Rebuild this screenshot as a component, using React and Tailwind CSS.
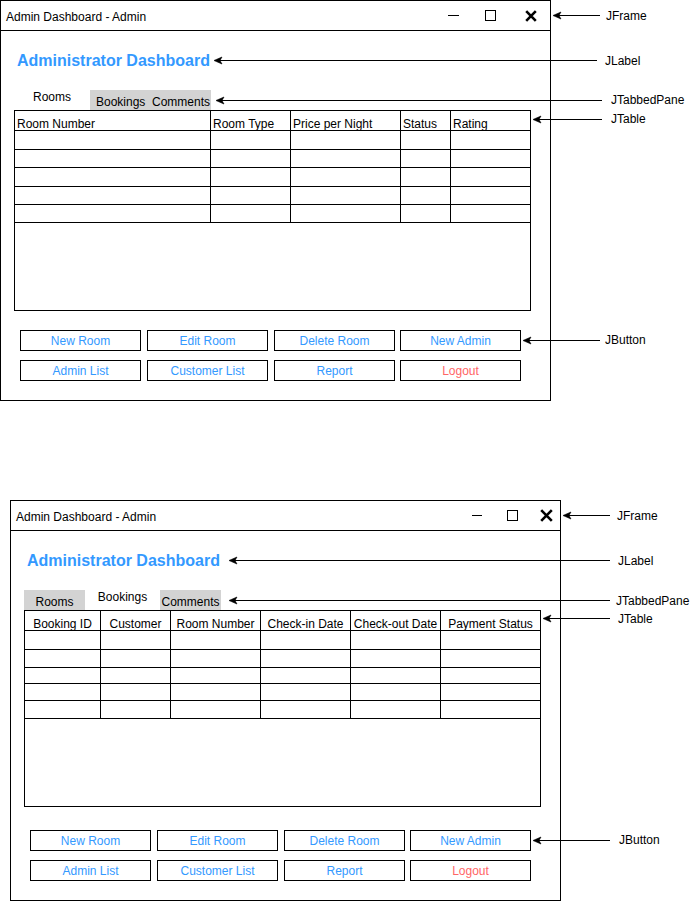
import React from 'react';

const FONT = "font-['Liberation_Sans',Arial,Helvetica,sans-serif]";

function CloseX({ w }) {
  return (
    <svg width={w} height={w} viewBox={`0 0 ${w} ${w}`} className="block">
      <path d={`M1.2 1.2 L${w - 1.2} ${w - 1.2} M${w - 1.2} 1.2 L1.2 ${w - 1.2}`} stroke="#000" strokeWidth="2.6" fill="none" />
    </svg>
  );
}

function TitleBar({ v }) {
  return (
    <div className="h-[30px] border-b border-black flex items-center pl-[5px] shrink-0">
      <span className="leading-[12px] pt-[2px]">Admin Dashboard - Admin</span>
      {v === 1 ? (
        <div className="ml-auto mr-[13px] flex items-center">
          <div className="w-[11px] h-px bg-black" />
          <div className="ml-[26px] w-[11px] h-[11px] border border-black" />
          <div className="ml-[29px]"><CloseX w={12} /></div>
        </div>
      ) : (
        <div className="ml-auto mr-[7px] flex items-center">
          <div className="w-[10px] h-px bg-black" />
          <div className="ml-[25px] w-[11px] h-[11px] border border-black" />
          <div className="ml-[22px]"><CloseX w={13} /></div>
        </div>
      )}
    </div>
  );
}

const T1 = {
  cols: ['w-[196px]', 'w-[80px]', 'w-[110px]', 'w-[50px]'],
  heads: ['Room Number', 'Room Type', 'Price per Night', 'Status', 'Rating'],
  rows: ['h-[19px]', 'h-[18px]', 'h-[19px]', 'h-[18px]', 'h-[18px]'],
  height: 'h-[201px]',
  headCls: 'pl-[2px] text-left',
};

const T2 = {
  cols: ['w-[76px]', 'w-[70px]', 'w-[90px]', 'w-[90px]', 'w-[90px]'],
  heads: ['Booking ID', 'Customer', 'Room Number', 'Check-in Date', 'Check-out Date', 'Payment Status'],
  rows: ['h-[19px]', 'h-[18px]', 'h-[16px]', 'h-[17px]', 'h-[18px]'],
  height: 'h-[197px]',
  headCls: 'text-center',
};

function Table({ t }) {
  const n = t.heads.length;
  const cellCls = (i) => (i < n - 1 ? `${t.cols[i]} border-r border-black shrink-0` : 'flex-1');
  return (
    <div className={`ml-[13px] w-[517px] ${t.height} border border-black flex flex-col shrink-0`}>
      <div className="h-[20px] flex border-b border-black">
        {t.heads.map((h, i) => (
          <div key={i} className={`${cellCls(i)} ${t.headCls} pt-[7px] leading-[12px] whitespace-nowrap overflow-visible`}>{h}</div>
        ))}
      </div>
      {t.rows.map((r, ri) => (
        <div key={ri} className={`${r} flex border-b border-black`}>
          {t.heads.map((h, i) => (
            <div key={i} className={cellCls(i)} />
          ))}
        </div>
      ))}
      <div className="flex-1" />
    </div>
  );
}

function Btn({ children, cls = '', red = false }) {
  return (
    <div className={`w-[121px] h-[21px] border border-black flex items-center justify-center leading-[12px] ${red ? 'text-[#ff6666]' : 'text-[#3399ff]'} ${cls}`}>
      {children}
    </div>
  );
}

function Buttons({ mt }) {
  return (
    <div className={`${mt} ml-[19px] flex flex-col gap-[9px]`}>
      <div className="flex">
        <Btn>New Room</Btn>
        <Btn cls="ml-[6px]">Edit Room</Btn>
        <Btn cls="ml-[6px]">Delete Room</Btn>
        <Btn cls="ml-[5px]">New Admin</Btn>
      </div>
      <div className="flex">
        <Btn>Admin List</Btn>
        <Btn cls="ml-[6px]">Customer List</Btn>
        <Btn cls="ml-[6px]">Report</Btn>
        <Btn cls="ml-[5px]" red>Logout</Btn>
      </div>
    </div>
  );
}

function Frame({ v }) {
  return (
    <div className={`w-[551px] h-[401px] border border-black flex flex-col bg-white ${v === 2 ? 'ml-[10px] mt-[99px]' : ''}`}>
      <TitleBar v={v} />
      <div className="mt-[20px] h-[20px] pl-[16px] text-[16px] leading-[20px] font-bold text-[#3399ff] whitespace-nowrap">
        Administrator Dashboard
      </div>
      {v === 1 ? (
        <div className="mt-[19px] ml-[13px] h-[20px] flex">
          <div className="w-[76px] pl-[19px] pt-[1px] leading-[12px]">Rooms</div>
          <div className="w-[121px] h-[20px] bg-[#d3d3d3] pl-[6px] pt-[6px] leading-[12px] whitespace-pre">Bookings  Comments</div>
        </div>
      ) : (
        <div className="mt-[19px] ml-[13px] h-[20px] flex">
          <div className="w-[61px] h-[20px] bg-[#d3d3d3] text-center pt-[6px] leading-[12px]">Rooms</div>
          <div className="w-[75px] text-center pt-[1px] leading-[12px]">Bookings</div>
          <div className="w-[61px] h-[20px] bg-[#d3d3d3] text-center pt-[6px] leading-[12px]">Comments</div>
        </div>
      )}
      <Table t={v === 1 ? T1 : T2} />
      <Buttons mt={v === 1 ? 'mt-[19px]' : 'mt-[23px]'} />
    </div>
  );
}

const ARROWS = [
  { tip: 553, y: 15, from: 600 },
  { tip: 214, y: 60, from: 597 },
  { tip: 216, y: 100, from: 602 },
  { tip: 533, y: 119, from: 602 },
  { tip: 523, y: 340, from: 600 },
  { tip: 563, y: 515, from: 610 },
  { tip: 229, y: 560, from: 610 },
  { tip: 229, y: 600, from: 610 },
  { tip: 543, y: 618, from: 610 },
  { tip: 533, y: 840, from: 610 },
];

const LABELS = [
  { t: 'JFrame', cls: 'left-[606px] top-[10px]' },
  { t: 'JLabel', cls: 'left-[605px] top-[55px]' },
  { t: 'JTabbedPane', cls: 'left-[611px] top-[94px]' },
  { t: 'JTable', cls: 'left-[611px] top-[113px]' },
  { t: 'JButton', cls: 'left-[605px] top-[334px]' },
  { t: 'JFrame', cls: 'left-[617px] top-[510px]' },
  { t: 'JLabel', cls: 'left-[618px] top-[555px]' },
  { t: 'JTabbedPane', cls: 'left-[616px] top-[595px]' },
  { t: 'JTable', cls: 'left-[618px] top-[613px]' },
  { t: 'JButton', cls: 'left-[619px] top-[834px]' },
];

export default function App() {
  return (
    <div className={`relative w-[696px] h-[902px] overflow-hidden bg-white text-black text-[12px] ${FONT}`}>
      <div className="flex flex-col">
        <Frame v={1} />
        <Frame v={2} />
      </div>
      <svg className="absolute inset-0 pointer-events-none" width="696" height="902" viewBox="0 0 696 902">
        {ARROWS.map((a, i) => {
          const y = a.y + 0.5;
          return (
            <g key={i}>
              <line x1={a.tip + 5} y1={y} x2={a.from} y2={y} stroke="#000" strokeWidth="1" />
              <path d={`M${a.tip} ${y} L${a.tip + 8} ${y - 3.5} L${a.tip + 6} ${y} L${a.tip + 8} ${y + 3.5} Z`} fill="#000" stroke="#000" strokeWidth="0.6" />
            </g>
          );
        })}
      </svg>
      {LABELS.map((l, i) => (
        <div key={i} className={`absolute ${l.cls} leading-[12px] whitespace-nowrap`}>{l.t}</div>
      ))}
    </div>
  );
}
